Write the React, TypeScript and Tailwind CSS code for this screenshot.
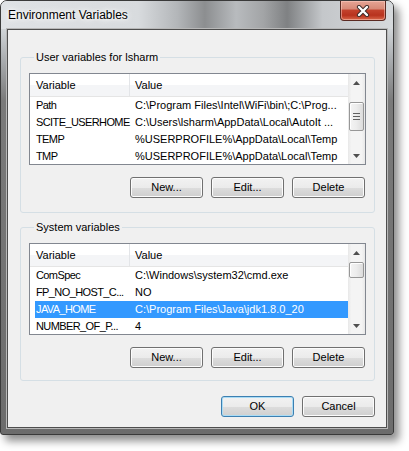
import React from "react"

const userRows = [
    { name: "Path", value: "C:\\Program Files\\Intel\\WiFi\\bin\\;C:\\Prog..." },
    { name: "SCITE_USERHOME", value: "C:\\Users\\lsharm\\AppData\\Local\\AutoIt ..." },
    { name: "TEMP", value: "%USERPROFILE%\\AppData\\Local\\Temp" },
    { name: "TMP", value: "%USERPROFILE%\\AppData\\Local\\Temp" },
]

const systemRows = [
    { name: "ComSpec", value: "C:\\Windows\\system32\\cmd.exe" },
    { name: "FP_NO_HOST_C...", value: "NO" },
    { name: "JAVA_HOME", value: "C:\\Program Files\\Java\\jdk1.8.0_20", selected: true },
    { name: "NUMBER_OF_P...", value: "4" },
]

type Row = { name: string; value: string; selected?: boolean }

function Arrow({ up }: { up?: boolean }) {
    return (
        <div className="h-[17px] flex items-center justify-center shrink-0">
            <svg width="7" height="4" viewBox="0 0 7 4">
                {up ? <path d="M0 4 L3.5 0 L7 4 Z" fill="#505050" /> : <path d="M0 0 L3.5 4 L7 0 Z" fill="#505050" />}
            </svg>
        </div>
    )
}

function ScrollBar({ thumb, grip }: { thumb: string; grip?: boolean }) {
    return (
        <div className="w-[17px] shrink-0 flex flex-col bg-[linear-gradient(90deg,#e8e8e8_0%,#f4f4f4_20%,#f4f4f4_80%,#e8e8e8_100%)]">
            <Arrow up />
            <div className="flex-1 flex flex-col">
                <div
                    className={`${thumb} mx-[1px] rounded-[2px] border border-[#979797] bg-[linear-gradient(90deg,#f4f4f4_0%,#ececec_50%,#dcdcdc_100%)] shadow-[inset_1px_1px_0_#fff] flex flex-col items-center justify-center gap-[2px]`}
                >
                    {grip && (
                        <>
                            <div className="w-[7px] h-[1px] bg-[#606060]" />
                            <div className="w-[7px] h-[1px] bg-[#606060]" />
                            <div className="w-[7px] h-[1px] bg-[#606060]" />
                        </>
                    )}
                </div>
            </div>
            <Arrow />
        </div>
    )
}

function ListView({ rows, thumb, grip }: { rows: Row[]; thumb: string; grip?: boolean }) {
    return (
        <div className="h-[92px] border border-[#828790] bg-white flex overflow-hidden">
            <div className="flex-1 flex flex-col">
                <div className="h-[23px] shrink-0 flex border-b border-[#e5e5e5] bg-[linear-gradient(#ffffff_0%,#ffffff_50%,#f4f5f7_50%,#f4f5f7_100%)]">
                    <div className="w-[100px] pl-[6px] flex items-center border-r border-[#e3e5e8]">Variable</div>
                    <div className="flex-1 pl-[5px] flex items-center">Value</div>
                </div>
                {rows.map((r) =>
                    r.selected ? (
                        <div key={r.name} className="h-[17px] shrink-0 pl-[5px] flex">
                            <div className="flex-1 flex bg-[#3399ff] text-white">
                                <div className="w-[95px] pl-[1px] flex items-center whitespace-nowrap tracking-[-0.6px]">{r.name}</div>
                                <div className="flex-1 pl-[5px] flex items-center whitespace-nowrap">{r.value}</div>
                            </div>
                        </div>
                    ) : (
                        <div key={r.name} className="h-[17px] shrink-0 flex">
                            <div className="w-[100px] pl-[6px] flex items-center whitespace-nowrap tracking-[-0.6px]">{r.name}</div>
                            <div className="flex-1 pl-[5px] flex items-center whitespace-nowrap">{r.value}</div>
                        </div>
                    ),
                )}
            </div>
            <ScrollBar thumb={thumb} grip={grip} />
        </div>
    )
}

function Button({ label, primary }: { label: string; primary?: boolean }) {
    return (
        <div
            className={`w-[73px] h-[21px] rounded-[3px] border flex items-center justify-center bg-[linear-gradient(#f2f2f2_0%,#ebebeb_50%,#dddddd_50%,#cfcfcf_100%)] ${
                primary
                    ? "border-[#3c7fb1] shadow-[inset_0_0_0_1px_#aadcf5]"
                    : "border-[#707070] shadow-[inset_0_0_0_1px_#fcfcfc]"
            }`}
        >
            {label}
        </div>
    )
}

function Group({ title, rows, thumb, grip, bottom }: { title: string; rows: Row[]; thumb: string; grip?: boolean; bottom: string }) {
    return (
        <fieldset className={`border border-[#d5dfe5] rounded-[3px] px-[8px] pt-[9px] ${bottom}`}>
            <legend className="ml-[5px] px-[2px] leading-[14px]">{title}</legend>
            <ListView rows={rows} thumb={thumb} grip={grip} />
            <div className="mt-[12px] flex justify-end gap-[8px] pr-[1px]">
                <Button label="New..." />
                <Button label="Edit..." />
                <Button label="Delete" />
            </div>
        </fieldset>
    )
}

export default function App() {
    return (
        <div className="w-[409px] h-[451px] bg-white font-['Liberation_Sans',Arial,sans-serif] text-[11px] text-black">
            <div className="w-[394px] h-[435px] rounded-t-[7px] rounded-b-[3px] border border-[#3a3a3a] flex flex-col shadow-[5px_6px_8px_rgba(0,0,0,0.45)] bg-[linear-gradient(180deg,#dfe3e6_0px,#cfd3d6_30px,#a8abae_60px,#7a7a7a_100px,#6c6c6c_100%)]">
                <div className="h-[28px] shrink-0 flex items-start justify-between rounded-t-[6px] bg-[linear-gradient(90deg,#dfe2e5_0%,#d8dbde_35%,#b3b6b9_45%,#8c8e90_52%,#b8bbbe_60%,#a2a4a6_67%,#7f8183_73%,#c4c7ca_82%,#d6d9dc_100%)]">
                    <span className="pl-[7px] pt-[7px] text-[12px] leading-[15px] [text-shadow:0_0_6px_#fff,0_0_10px_#fff,0_0_3px_#fff]">
                        Environment Variables
                    </span>
                    <div className="mr-[7px] w-[46px] h-[20px] rounded-b-[4px] border border-t-0 border-[#5b2a22] flex items-center justify-center bg-[linear-gradient(180deg,#e6a595_0%,#d88a78_40%,#c2412c_50%,#b8321e_75%,#d9674a_100%)] shadow-[inset_0_0_0_1px_rgba(255,210,200,0.5)]">
                        <svg width="14" height="12" viewBox="0 0 14 12">
                            <path d="M3 2 L11 10 M11 2 L3 10" stroke="#3b2a28" strokeWidth="4.2" strokeLinecap="round" />
                            <path d="M3 2 L11 10 M11 2 L3 10" stroke="#ffffff" strokeWidth="2.4" strokeLinecap="round" />
                        </svg>
                    </div>
                </div>
                <div className="flex-1 mx-[6px] mb-[6px] border border-[#4e4e4e] shadow-[0_0_0_1px_#b8b8b8] bg-[#f0f0f0] flex flex-col pl-[12px] pr-[11px] pt-[20px]">
                    <Group title="User variables for lsharm" rows={userRows} thumb="mt-[11px] h-[29px]" grip bottom="pb-[14px]" />
                    <div className="mt-[7px]">
                        <Group title="System variables" rows={systemRows} thumb="mt-[1px] h-[16px]" bottom="pb-[12px]" />
                    </div>
                    <div className="mt-[15px] flex justify-end gap-[8px]">
                        <Button label="OK" primary />
                        <Button label="Cancel" />
                    </div>
                </div>
            </div>
        </div>
    )
}
